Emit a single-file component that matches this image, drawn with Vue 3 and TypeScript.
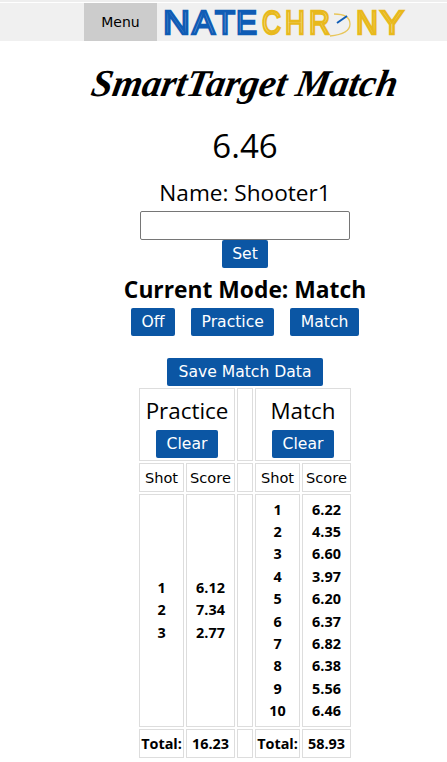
<script setup lang="ts">
  type Shot = { shot: number; score: string };
  type LogoLetter = { ch: string; x: number; w: number; color: string; inner: string };

  const blue = "#0f5cb5";
  const blueInner = "#7fa9da";
  const gold = "#e8b91c";
  const goldInner = "#f7e7ae";

  const logoLetters: LogoLetter[] = [
    { ch: "N", x: 2, w: 27, color: blue, inner: blueInner },
    { ch: "A", x: 31, w: 23, color: blue, inner: blueInner },
    { ch: "T", x: 54, w: 20, color: blue, inner: blueInner },
    { ch: "E", x: 75, w: 21, color: blue, inner: blueInner },
    { ch: "C", x: 101, w: 19, color: gold, inner: goldInner },
    { ch: "H", x: 124, w: 20, color: gold, inner: goldInner },
    { ch: "R", x: 148, w: 21, color: gold, inner: goldInner },
    { ch: "N", x: 195, w: 22, color: gold, inner: goldInner },
    { ch: "Y", x: 219, w: 24, color: gold, inner: goldInner },
  ];

  const modes: string[] = ["Off", "Practice", "Match"];

  const practice: Shot[] = [
    { shot: 1, score: "6.12" },
    { shot: 2, score: "7.34" },
    { shot: 3, score: "2.77" },
  ];

  const match: Shot[] = [
    { shot: 1, score: "6.22" },
    { shot: 2, score: "4.35" },
    { shot: 3, score: "6.60" },
    { shot: 4, score: "3.97" },
    { shot: 5, score: "6.20" },
    { shot: 6, score: "6.37" },
    { shot: 7, score: "6.82" },
    { shot: 8, score: "6.38" },
    { shot: 9, score: "5.56" },
    { shot: 10, score: "6.46" },
  ];
</script>

<template>
  <div class="top-line"></div>
  <nav class="navbar">
    <div class="menu">Menu</div>
    <svg class="logo" width="245" height="38" viewBox="0 0 245 38" role="img" aria-label="NateChrony">
      <text
        v-for="l in logoLetters"
        :key="l.x"
        class="logo-letter"
        :x="l.x"
        y="31"
        :textLength="l.w"
        lengthAdjust="spacingAndGlyphs"
        :stroke="l.color"
        :fill="l.inner"
      >{{ l.ch }}</text>
      <path d="M173 11 Q189 11 189 21 Q189 31 169 33" fill="none" stroke="#e8c65a" stroke-width="1.3" />
      <path d="M176 20 L186 13" stroke="#0f5cb5" stroke-width="2" />
    </svg>
  </nav>

  <main class="page">
    <h1 class="title">SmartTarget Match</h1>
    <div class="current">6.46</div>
    <div class="name">Name: Shooter1</div>
    <input class="name-input" type="text" />
    <button class="btn">Set</button>
    <h2 class="mode">Current Mode: Match</h2>
    <div class="mode-buttons">
      <button class="btn" v-for="m in modes" :key="m">{{ m }}</button>
    </div>
    <button class="btn save">Save Match Data</button>

    <table class="scores">
      <colgroup>
        <col class="col-shot" />
        <col class="col-score" />
        <col class="col-gap" />
        <col class="col-shot" />
        <col class="col-score" />
      </colgroup>
      <tbody>
        <tr>
          <td colspan="2">
            <div class="table-title">Practice</div>
            <button class="btn clear">Clear</button>
          </td>
          <td></td>
          <td colspan="2">
            <div class="table-title">Match</div>
            <button class="btn clear">Clear</button>
          </td>
        </tr>
        <tr class="heads">
          <td>Shot</td>
          <td>Score</td>
          <td></td>
          <td>Shot</td>
          <td>Score</td>
        </tr>
        <tr class="data">
          <td><div v-for="p in practice" :key="p.shot">{{ p.shot }}</div></td>
          <td><div v-for="p in practice" :key="p.shot">{{ p.score }}</div></td>
          <td></td>
          <td><div v-for="m in match" :key="m.shot">{{ m.shot }}</div></td>
          <td><div v-for="m in match" :key="m.shot">{{ m.score }}</div></td>
        </tr>
        <tr class="totals">
          <td>Total:</td>
          <td>16.23</td>
          <td></td>
          <td>Total:</td>
          <td>58.93</td>
        </tr>
      </tbody>
    </table>
  </main>
</template>

<style scoped>
  .top-line {
    height: 2px;
    margin-bottom: 1px;
    background: #eeeeee;
  }

  .navbar {
    display: flex;
    height: 38px;
    padding-left: 84px;
    background: #f0f0f0;
  }

  .menu {
    width: 73px;
    height: 38px;
    line-height: 38px;
    text-align: center;
    background: #cccccc;
    color: #000;
    font-family: "DejaVu Sans", sans-serif;
    font-size: 14px;
  }

  .logo {
    margin-left: 4px;
  }

  .logo-letter {
    font-family: "Liberation Sans", sans-serif;
    font-size: 34px;
    stroke-width: 2.4;
  }

  .page {
    display: flex;
    flex-direction: column;
    align-items: center;
    padding-left: 43px;
    font-family: "Open Sans", sans-serif;
    color: #000;
  }

  .title {
    margin: 20px 0 0;
    height: 45px;
    font-family: "Liberation Serif", serif;
    font-size: 38px;
    line-height: 45px;
    font-style: italic;
    font-weight: 700;
    white-space: nowrap;
    transform: skewX(-10deg);
  }

  .current {
    margin-top: 17px;
    font-size: 33px;
    line-height: 46px;
  }

  .name {
    margin-top: 9px;
    font-size: 22.6px;
    line-height: 30px;
  }

  .name-input {
    box-sizing: border-box;
    width: 210px;
    height: 29px;
    margin: 3px 0 0;
    border: 1px solid #767676;
    border-radius: 2px;
    background: #fff;
  }

  .btn {
    box-sizing: border-box;
    height: 28px;
    padding: 0 10.5px;
    border: none;
    border-radius: 2px;
    background: #0b56a4;
    color: #fff;
    font-family: "DejaVu Sans", sans-serif;
    font-size: 15.6px;
    line-height: 28px;
  }

  .mode {
    margin: 7px 0 0;
    font-size: 22.8px;
    line-height: 30px;
    font-weight: 700;
  }

  .mode-buttons {
    display: flex;
    gap: 16px;
    margin-top: 3px;
  }

  .save {
    margin-top: 22px;
    padding: 0 11px;
  }

  .scores {
    width: 216px;
    table-layout: fixed;
    border-collapse: separate;
    border-spacing: 2px;
    text-align: center;
  }

  .col-shot {
    width: 45px;
  }

  .col-score {
    width: 49px;
  }

  .col-gap {
    width: 16px;
  }

  .scores td {
    padding: 2px 0;
    border: 1px solid #dddddd;
    white-space: nowrap;
  }

  .table-title {
    font-size: 22.4px;
    line-height: 39px;
  }

  .clear {
    display: block;
    margin: 0 auto;
  }

  .heads td {
    height: 23px;
    font-family: "DejaVu Sans", sans-serif;
    font-size: 14.6px;
  }

  .data td {
    padding: 3.5px 0;
    font-size: 14.4px;
    line-height: 22.4px;
    font-weight: 700;
  }

  .totals td {
    height: 23px;
    font-size: 14.4px;
    font-weight: 700;
  }
</style>

<style>
  html,
  body {
    margin: 0;
    background: #fff;
  }
</style>
